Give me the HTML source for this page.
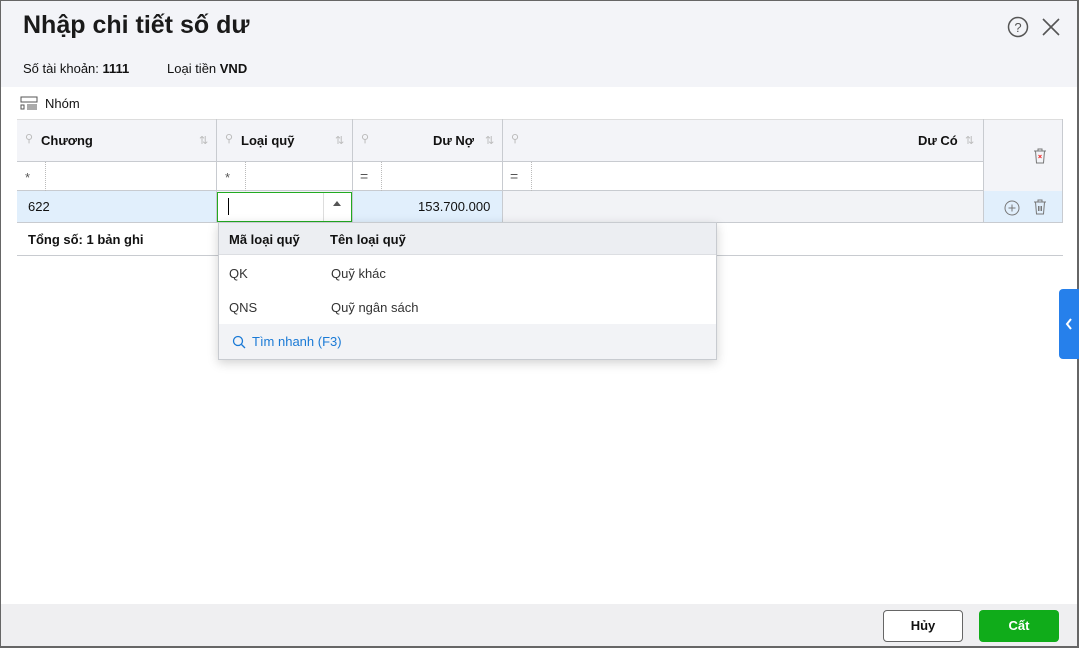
<!DOCTYPE html><html><head><meta charset="utf-8"><style>
*{box-sizing:border-box;margin:0;padding:0}
body{width:1079px;height:648px;position:relative;overflow:hidden;font-family:"Liberation Sans",sans-serif;background:#fff;color:#111}
.a{position:absolute}
.f13{font-size:13px}
.b{font-weight:bold}
</style></head><body>
<div class="a" style="left:0;top:0;width:1079px;height:648px;border:1px solid #666;border-right:2px solid #666;border-bottom:2px solid #666"></div>
<div class="a" style="left:1px;top:1px;width:1076px;height:86px;background:#f3f4f8"></div>
<div class="a b" style="left:23px;top:11px;font-size:25px;color:#1a1a1a">Nhập chi tiết số dư</div>
<div class="a f13" style="left:23px;top:61px">Số tài khoản: <b>1111</b></div>
<div class="a f13" style="left:167px;top:61px">Loại tiền <b>VND</b></div>
<svg class="a" style="left:1007px;top:16px" width="22" height="22"><circle cx="11" cy="11" r="9.5" fill="none" stroke="#555" stroke-width="1.5"/><text x="11" y="16" font-size="13" text-anchor="middle" fill="#555" font-family="Liberation Sans">?</text></svg>
<svg class="a" style="left:1041px;top:17px" width="20" height="20"><path d="M2 2L18 18M18 2L2 18" stroke="#555" stroke-width="1.6"/></svg>
<svg class="a" style="left:20px;top:96px" width="18" height="14"><rect x="1" y="1" width="16" height="5" fill="none" stroke="#555"/><rect x="1" y="9" width="3" height="4" fill="none" stroke="#555"/><path d="M7 9h10M7 11h10M7 13h10" stroke="#555"/></svg>
<div class="a f13" style="left:45px;top:96px">Nhóm</div>
<!-- table -->
<div class="a" style="left:17px;top:119px;width:1046px;height:72px;background:#f3f4f8;border-top:1px solid #ddd"></div>
<div class="a" style="left:17px;top:161px;width:966px;height:30px;background:#fff;border-top:1px solid #c8cbd0;border-bottom:1px solid #c8cbd0"></div>
<div class="a" style="left:17px;top:191px;width:1046px;height:32px;background:#f2f3f6;border-bottom:1px solid #c8cbd0"></div>
<div class="a" style="left:17px;top:191px;width:199px;height:31px;background:#e1effc"></div>
<div class="a" style="left:352px;top:191px;width:150px;height:31px;background:#e1effc"></div>
<div class="a" style="left:983px;top:191px;width:80px;height:31px;background:#e1effc"></div>
<div class="a" style="left:216px;top:119px;width:1px;height:103px;background:#c8cbd0"></div>
<div class="a" style="left:352px;top:119px;width:1px;height:103px;background:#c8cbd0"></div>
<div class="a" style="left:502px;top:119px;width:1px;height:103px;background:#c8cbd0"></div>
<div class="a" style="left:983px;top:119px;width:1px;height:103px;background:#c8cbd0"></div>
<div class="a" style="left:1062px;top:119px;width:1px;height:103px;background:#c8cbd0"></div>
<div class="a" style="left:45px;top:162px;height:29px;border-left:1px dotted #bbb"></div>
<div class="a" style="left:245px;top:162px;height:29px;border-left:1px dotted #bbb"></div>
<div class="a" style="left:381px;top:162px;height:29px;border-left:1px dotted #bbb"></div>
<div class="a" style="left:531px;top:162px;height:29px;border-left:1px dotted #bbb"></div>
<div class="a f13 b" style="left:41px;top:133px">Chương</div>
<div class="a f13 b" style="left:241px;top:133px">Loại quỹ</div>
<div class="a f13 b" style="left:433px;top:133px">Dư Nợ</div>
<div class="a f13 b" style="left:918px;top:133px">Dư Có</div>
<div class="a" style="left:25px;top:132px;color:#bbb;font-size:11px">⚲</div>
<div class="a" style="left:225px;top:132px;color:#bbb;font-size:11px">⚲</div>
<div class="a" style="left:361px;top:132px;color:#bbb;font-size:11px">⚲</div>
<div class="a" style="left:511px;top:132px;color:#bbb;font-size:11px">⚲</div>
<div class="a" style="left:199px;top:134px;color:#bbb;font-size:11px">⇅</div>
<div class="a" style="left:335px;top:134px;color:#bbb;font-size:11px">⇅</div>
<div class="a" style="left:485px;top:134px;color:#bbb;font-size:11px">⇅</div>
<div class="a" style="left:965px;top:134px;color:#bbb;font-size:11px">⇅</div>
<div class="a" style="left:25px;top:170px;color:#555;font-size:13px">*</div>
<div class="a" style="left:225px;top:170px;color:#555;font-size:13px">*</div>
<div class="a" style="left:360px;top:168px;color:#555;font-size:14px">=</div>
<div class="a" style="left:510px;top:168px;color:#555;font-size:14px">=</div>
<svg class="a" style="left:1032px;top:147px" width="16" height="17"><path d="M2 4h12M6 4V2h4v2M3.5 4l1 12h7l1-12" fill="none" stroke="#777"/><path d="M6.5 8l3 3M9.5 8l-3 3" stroke="#e33"/></svg>
<div class="a f13" style="left:28px;top:199px">622</div>
<div class="a f13" style="left:418px;top:199px">153.700.000</div>
<div class="a" style="left:217px;top:192px;width:135px;height:30px;background:#fff;border:1px solid #22aa22"></div>
<div class="a" style="left:228px;top:198px;width:1px;height:17px;background:#000"></div>
<div class="a" style="left:323px;top:193px;height:28px;border-left:1px solid #ddd"></div>
<div class="a" style="left:333px;top:201px;width:0;height:0;border-left:4px solid transparent;border-right:4px solid transparent;border-bottom:5px solid #555"></div>
<svg class="a" style="left:1003px;top:199px" width="18" height="18"><circle cx="9" cy="9" r="7" fill="none" stroke="#777"/><path d="M9 5.5v7M5.5 9h7" stroke="#777"/></svg>
<svg class="a" style="left:1032px;top:198px" width="16" height="17"><path d="M2 4h12M6 4V2h4v2M3.5 4l1 12h7l1-12M6.5 8v5M8 8v5M9.5 8v5" fill="none" stroke="#777"/></svg>
<div class="a f13 b" style="left:28px;top:232px">Tổng số: 1 bản ghi</div>
<div class="a" style="left:17px;top:255px;width:1046px;height:1px;background:#c8cbd0"></div>
<!-- dropdown -->
<div class="a" style="left:218px;top:222px;width:499px;height:138px;background:#fff;border:1px solid #c8cbd0;box-shadow:0 3px 10px rgba(0,0,0,.18)"></div>
<div class="a" style="left:219px;top:223px;width:497px;height:32px;background:#eceef2;border-bottom:1px solid #dcdee2"></div>
<div class="a f13 b" style="left:229px;top:232px">Mã loại quỹ</div>
<div class="a f13 b" style="left:330px;top:232px">Tên loại quỹ</div>
<div class="a f13" style="left:229px;top:266px;color:#333">QK</div>
<div class="a f13" style="left:331px;top:266px;color:#333">Quỹ khác</div>
<div class="a f13" style="left:229px;top:300px;color:#333">QNS</div>
<div class="a f13" style="left:331px;top:300px;color:#333">Quỹ ngân sách</div>
<div class="a" style="left:219px;top:324px;width:497px;height:35px;background:#f2f3f6"></div>
<svg class="a" style="left:232px;top:335px" width="14" height="14"><circle cx="6" cy="6" r="4.5" fill="none" stroke="#1a7ad6" stroke-width="1.3"/><path d="M9.5 9.5L13 13" stroke="#1a7ad6" stroke-width="1.3"/></svg>
<div class="a f13" style="left:252px;top:334px;color:#1a7ad6">Tìm nhanh (F3)</div>
<!-- side tab -->
<div class="a" style="left:1059px;top:289px;width:20px;height:70px;background:#2680eb;border-radius:4px 0 0 4px"></div>
<svg class="a" style="left:1064px;top:318px" width="10" height="12"><path d="M7 1L3 6l4 5" fill="none" stroke="#fff" stroke-width="2"/></svg>
<!-- footer -->
<div class="a" style="left:1px;top:604px;width:1076px;height:42px;background:#efeff1"></div>
<div class="a b" style="left:883px;top:610px;width:80px;height:32px;background:#fff;border:1px solid #666;border-radius:4px;text-align:center;line-height:30px;font-size:13px">Hủy</div>
<div class="a b" style="left:979px;top:610px;width:80px;height:32px;background:#10ac1a;border-radius:4px;text-align:center;line-height:32px;font-size:13px;color:#fff">Cất</div>
</body></html>
